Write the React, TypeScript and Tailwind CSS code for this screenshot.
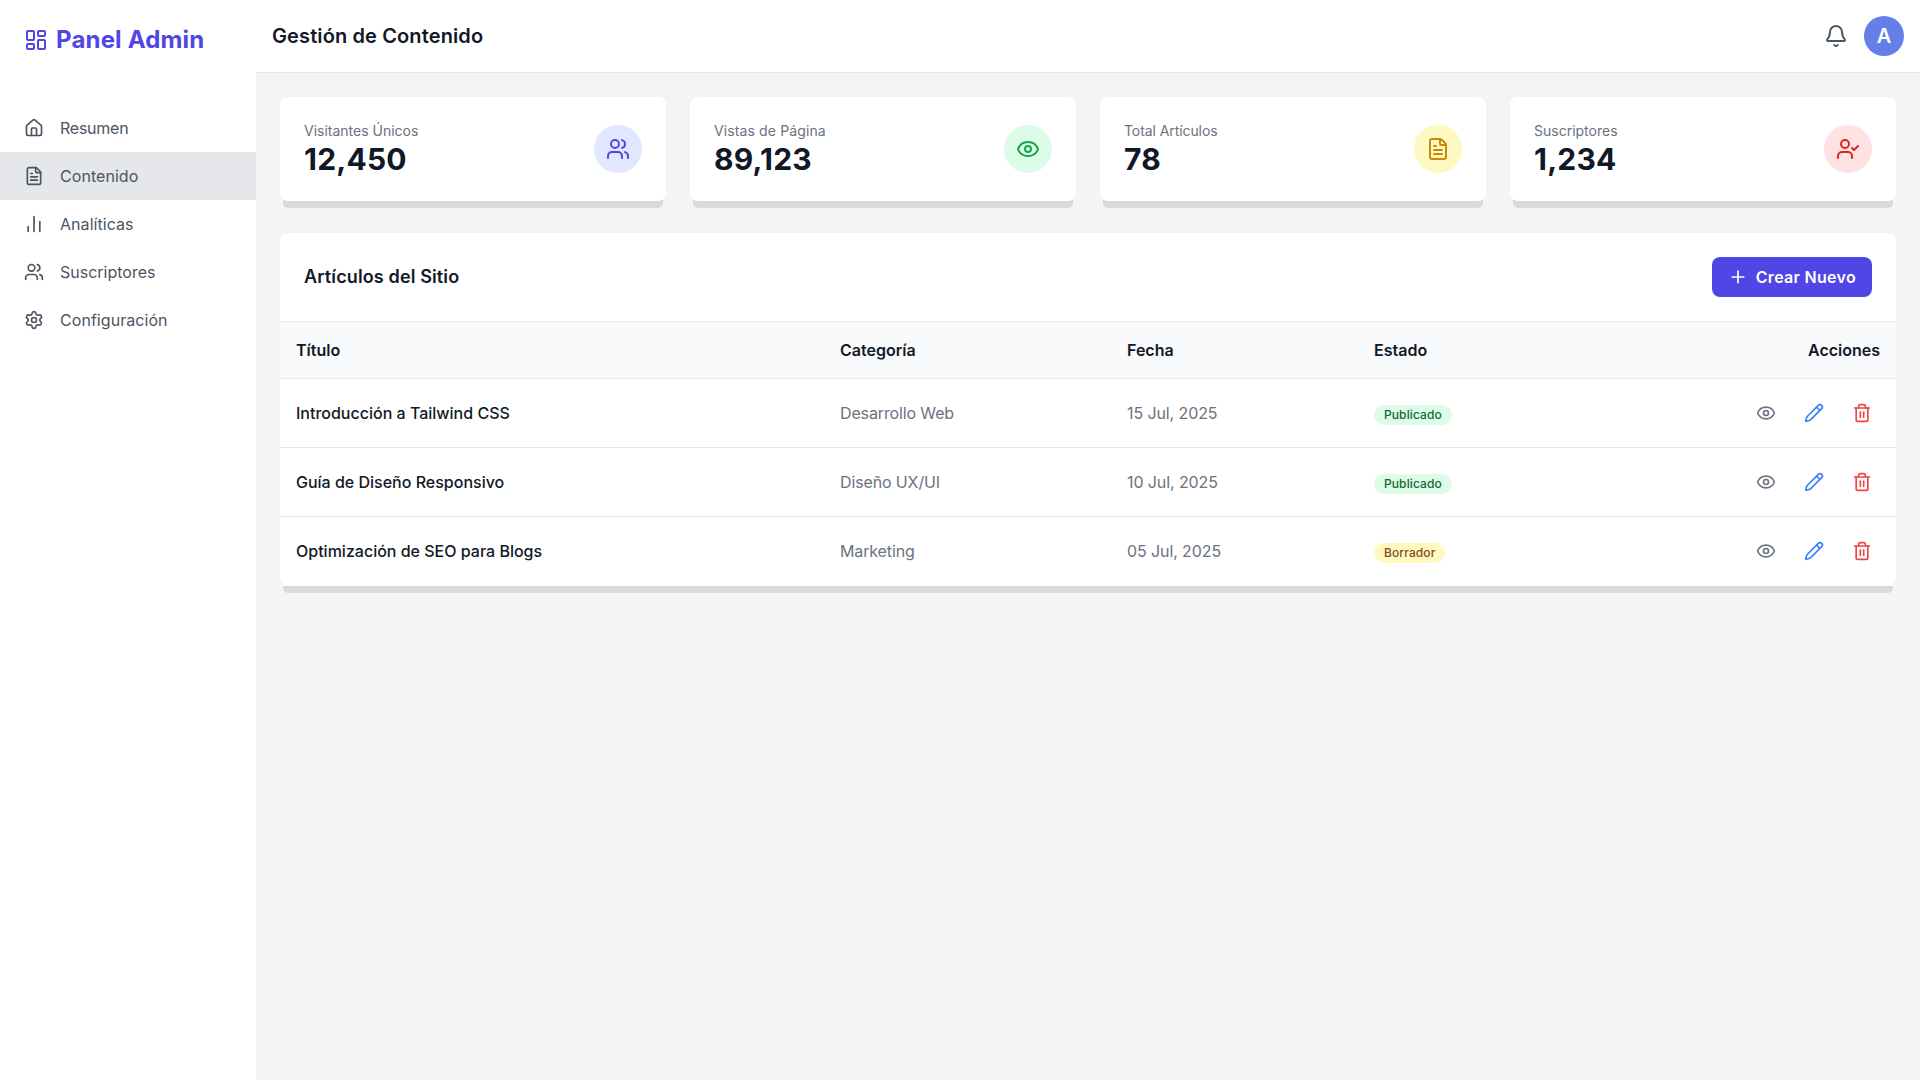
import { LayoutDashboard, House, FileText, ChartNoAxesColumn, Users, Settings, Bell, Eye, UserCheck, Plus, Pencil, Trash2 } from "lucide-react";

const nav = [
  { label: "Resumen", Icon: House, track: "tracking-[-0.25px]" },
  { label: "Contenido", Icon: FileText, active: true, track: "tracking-[0.05px]" },
  { label: "Analíticas", Icon: ChartNoAxesColumn, track: "tracking-[0.05px]" },
  { label: "Suscriptores", Icon: Users, track: "" },
  { label: "Configuración", Icon: Settings, track: "tracking-[0.05px]" },
];

const stats = [
  { label: "Visitantes Únicos", value: "12,450", Icon: Users, circle: "bg-indigo-100 text-[#4f46e5]", track: "" },
  { label: "Vistas de Página", value: "89,123", Icon: Eye, circle: "bg-[#dcfce7] text-[#16a34a]", track: "tracking-[0.12px]" },
  { label: "Total Artículos", value: "78", Icon: FileText, circle: "bg-[#fef9c3] text-[#ca8a04]", track: "tracking-[-0.08px]" },
  { label: "Suscriptores", value: "1,234", Icon: UserCheck, circle: "bg-[#fee2e2] text-[#dc2626]", track: "" },
];

const rows = [
  { title: "Introducción a Tailwind CSS", cat: "Desarrollo Web", date: "15 Jul, 2025", status: "Publicado", badge: "bg-[#dcfce7] text-[#166534]" },
  { title: "Guía de Diseño Responsivo", cat: "Diseño UX/UI", date: "10 Jul, 2025", status: "Publicado", badge: "bg-[#dcfce7] text-[#166534]" },
  { title: "Optimización de SEO para Blogs", cat: "Marketing", date: "05 Jul, 2025", status: "Borrador", badge: "bg-[#fef9c3] text-[#854d0e]" },
];

export default function App() {
  return (
    <div className="flex h-screen bg-[#f3f4f6] font-['Inter',sans-serif] overflow-hidden">
      <aside className="w-64 shrink-0 bg-white">
        <div className="p-6 flex items-center gap-2 h-20 text-[#4f46e5]">
          <LayoutDashboard size={24} />
          <span className="text-2xl font-bold tracking-[0.17px]">Panel Admin</span>
        </div>
        <nav className="mt-6">
          {nav.map(({ label, Icon, active, track }) => (
            <a key={label} className={`flex items-center h-12 px-6 gap-4 text-base text-[#4b5563] ${active ? "bg-[#e5e7eb]" : ""}`}>
              <Icon size={20} />
              <span className={track}>{label}</span>
            </a>
          ))}
        </nav>
      </aside>
      <div className="flex-1 flex flex-col min-w-0">
        <header className="h-[73px] shrink-0 bg-white border-b border-[#e5e7eb] flex items-center justify-between px-4">
          <h1 className="text-xl font-semibold text-[#111827] tracking-[0.12px]">Gestión de Contenido</h1>
          <div className="flex items-center gap-4">
            <Bell size={24} className="text-[#4b5563]" />
            <div className="w-10 h-10 rounded-full bg-[#6480e8] text-white flex items-center justify-center text-xl font-semibold">A</div>
          </div>
        </header>
        <main className="flex-1 p-6">
          <div className="grid grid-cols-4 gap-6">
            {stats.map(({ label, value, Icon, circle, track }) => (
              <div key={label} className="bg-white rounded-lg p-6 flex items-center justify-between shadow-[0_10px_0_-3px_#d9dadc]">
                <div>
                  <p className={`text-sm text-[#6b7280] ${track}`}>{label}</p>
                  <p className="text-3xl font-bold text-[#111827] tracking-[0.2px]">{value}</p>
                </div>
                <div className={`w-12 h-12 rounded-full flex items-center justify-center ${circle}`}>
                  <Icon size={24} />
                </div>
              </div>
            ))}
          </div>
          <section className="mt-8 bg-white rounded-lg shadow-[0_10px_0_-3px_#d9dadc]">
            <div className="p-6 flex items-center justify-between border-b border-[#e5e7eb]">
              <h2 className="text-lg font-semibold text-[#111827] tracking-[0.13px]">Artículos del Sitio</h2>
              <button className="h-10 px-4 rounded-lg bg-[#4f46e5] text-white font-semibold flex items-center gap-2 tracking-[0.3px]">
                <Plus size={20} />
                Crear Nuevo
              </button>
            </div>
            <table className="w-full text-left">
              <thead>
                <tr className="bg-[#f9fafb] border-b border-[#e5e7eb]">
                  <th className="w-[544px] px-4 py-4 font-semibold text-[#111827]">Título</th>
                  <th className="w-[287px] px-4 py-4 font-semibold text-[#111827]">Categoría</th>
                  <th className="w-[247px] px-4 py-4 font-semibold text-[#111827]">Fecha</th>
                  <th className="px-4 py-4 font-semibold text-[#111827]">Estado</th>
                  <th className="px-4 py-4 font-semibold text-[#111827] text-right">Acciones</th>
                </tr>
              </thead>
              <tbody>
                {rows.map((r, i) => (
                  <tr key={r.title} className={`border-b ${i < rows.length - 1 ? "border-[#e5e7eb]" : "border-white"}`}>
                    <td className="px-4 py-4 font-medium text-[#111827]">{r.title}</td>
                    <td className="px-4 py-4 text-[#6b7280] tracking-[-0.13px]">{r.cat}</td>
                    <td className="px-4 py-4 text-[#6b7280] tracking-[-0.1px]">{r.date}</td>
                    <td className="px-4 py-4">
                      <span className={`inline-block px-2.5 py-0.5 rounded-full text-xs font-medium tracking-[0.1px] ${r.badge}`}>{r.status}</span>
                    </td>
                    <td className="px-4 py-4">
                      <div className="flex justify-end gap-3">
                        <button className="p-2 text-[#6b7280]"><Eye size={20} /></button>
                        <button className="p-2 text-[#3b82f6]"><Pencil size={20} /></button>
                        <button className="p-2 text-[#ef4444]"><Trash2 size={20} /></button>
                      </div>
                    </td>
                  </tr>
                ))}
              </tbody>
            </table>
          </section>
        </main>
      </div>
    </div>
  );
}
